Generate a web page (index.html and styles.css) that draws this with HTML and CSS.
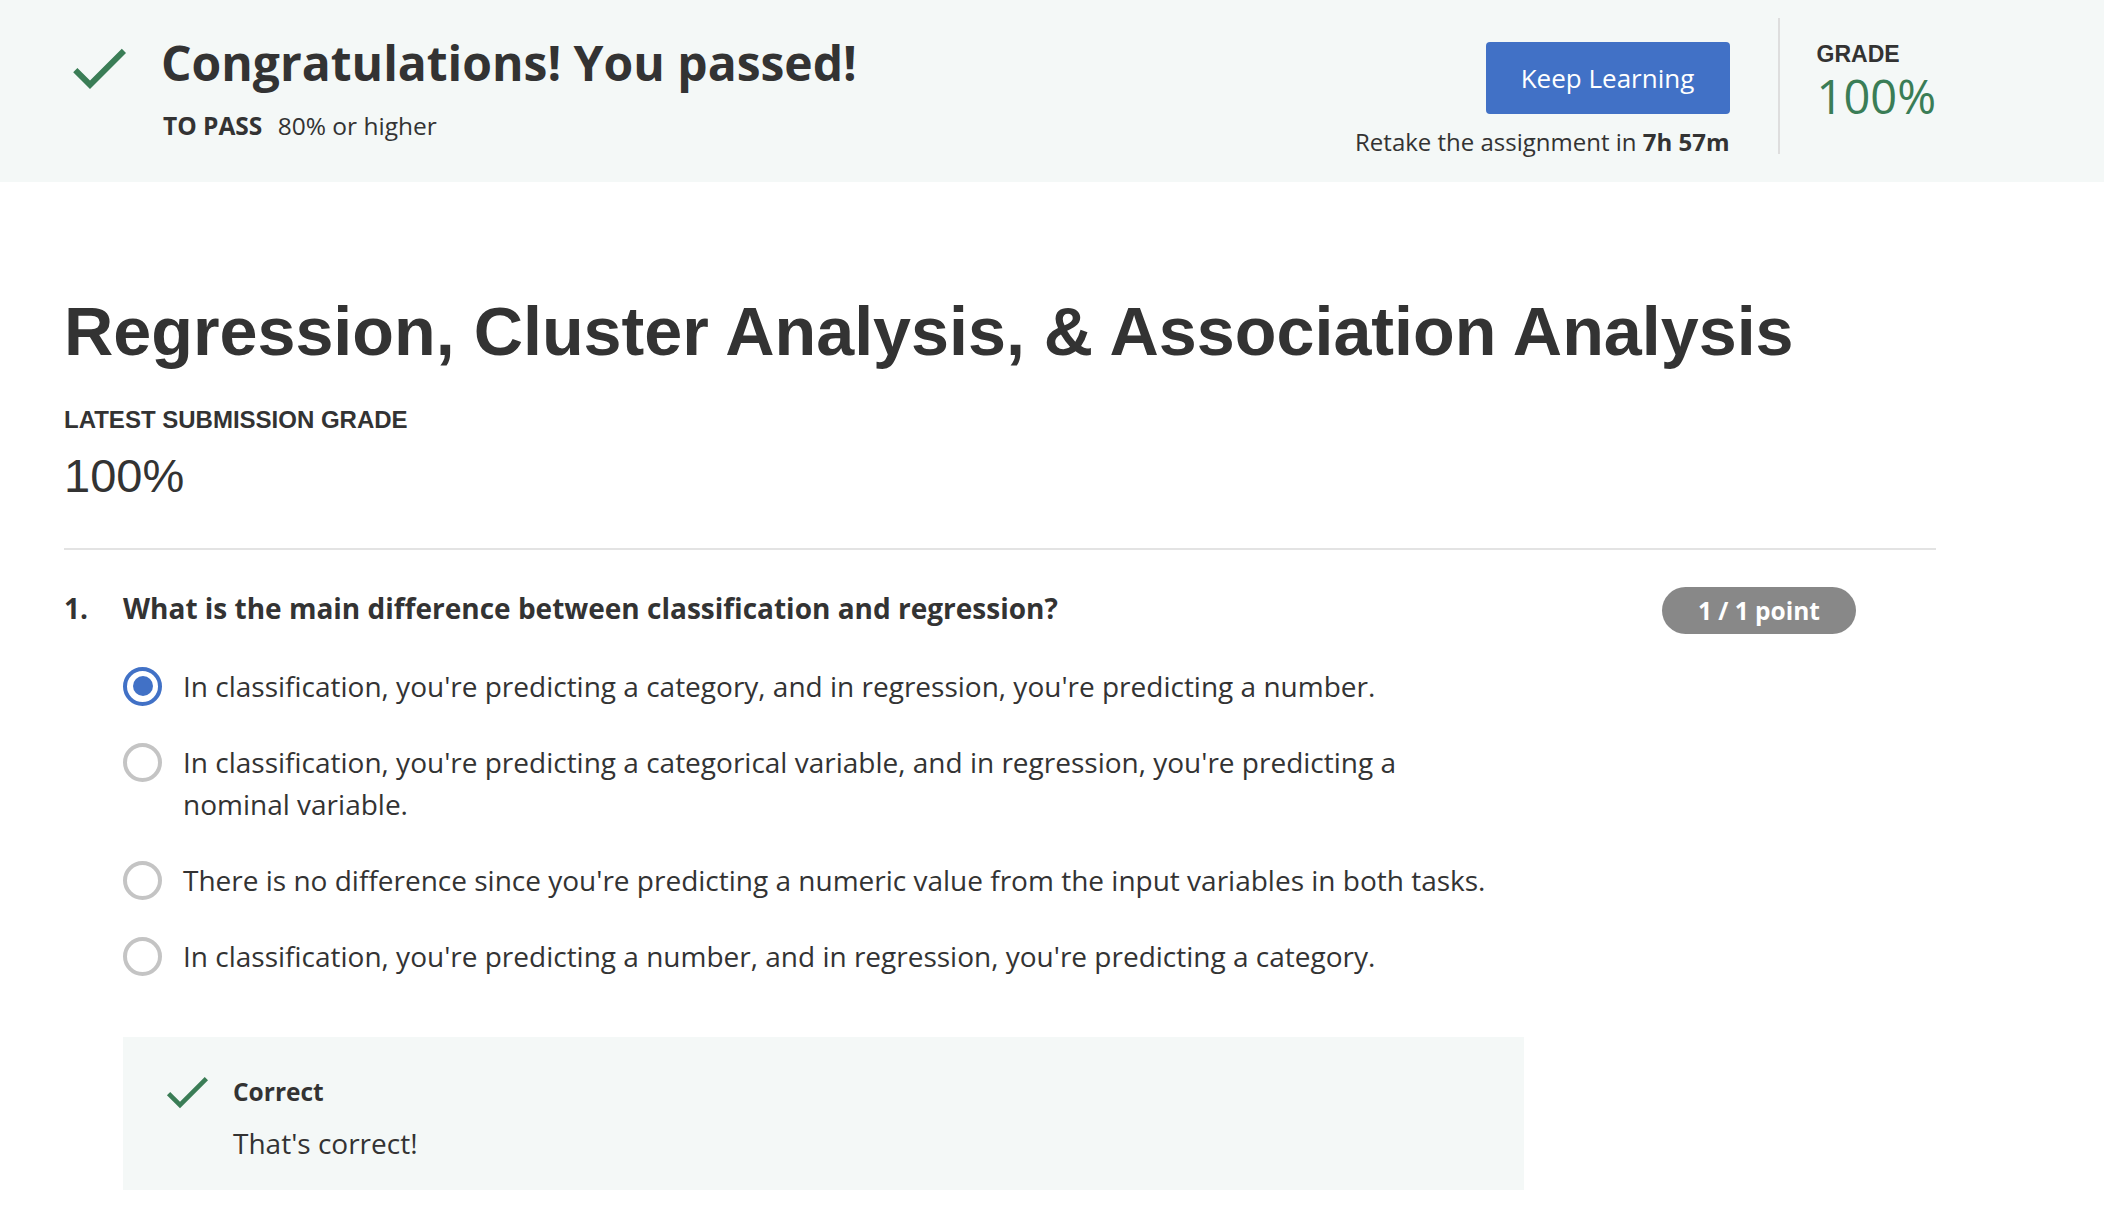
FILE: index.html
```html
<!DOCTYPE html>
<html lang="en">
<head>
<meta charset="utf-8">
<title>Regression, Cluster Analysis, &amp; Association Analysis</title>
<link rel="stylesheet" href="styles.css">
</head>
<body>
<header class="banner">
  <div class="banner-inner">
    <div class="pass">
      <svg class="pass-check" viewBox="0 0 24 24" aria-hidden="true"><path d="M9 16.2L4.8 12l-1.4 1.4L9 19 21 7l-1.4-1.4L9 16.2z"/></svg>
      <div class="pass-text">
        <h1 class="pass-title">Congratulations! You passed!</h1>
        <p class="to-pass"><strong>TO PASS</strong> 80% or higher</p>
      </div>
    </div>
    <div class="banner-right">
      <div class="actions">
        <button class="btn" type="button">Keep Learning</button>
        <p class="retake">Retake the assignment in <strong>7h 57m</strong></p>
      </div>
      <div class="grade">
        <div class="grade-label">GRADE</div>
        <div class="grade-value">100%</div>
      </div>
    </div>
  </div>
</header>

<main class="content">
  <h2 class="title">Regression, Cluster Analysis, &amp; Association Analysis</h2>
  <div class="latest-label">LATEST SUBMISSION GRADE</div>
  <div class="latest-value">100%</div>
  <hr class="divider">

  <section class="question">
    <div class="q-head">
      <span class="q-num">1.</span>
      <span class="q-text">What is the main difference between classification and regression?</span>
      <span class="badge">1 / 1 point</span>
    </div>
    <ul class="options">
      <li class="option"><span class="radio checked"></span><span class="opt-text">In classification, you're predicting a category, and in regression, you're predicting a number.</span></li>
      <li class="option"><span class="radio"></span><span class="opt-text">In classification, you're predicting a categorical variable, and in regression, you're predicting a nominal variable.</span></li>
      <li class="option"><span class="radio"></span><span class="opt-text">There is no difference since you're predicting a numeric value from the input variables in both tasks.</span></li>
      <li class="option"><span class="radio"></span><span class="opt-text">In classification, you're predicting a number, and in regression, you're predicting a category.</span></li>
    </ul>
    <div class="feedback">
      <svg class="fb-check" viewBox="0 0 24 24" aria-hidden="true"><path d="M9 16.2L4.8 12l-1.4 1.4L9 19 21 7l-1.4-1.4L9 16.2z"/></svg>
      <div class="fb-text">
        <div class="fb-title">Correct</div>
        <div class="fb-body">That's correct!</div>
      </div>
    </div>
  </section>
</main>
</body>
</html>
```

FILE: styles.css
```css
* { box-sizing: border-box; }

body {
  margin: 0;
  background: #ffffff;
  color: #333333;
  font-family: "Open Sans", "Noto Sans", sans-serif;
}

/* ---------- banner ---------- */
.banner {
  background: #f4f8f7;
  height: 182px;
}

.banner-inner {
  display: flex;
  justify-content: space-between;
  padding: 0 168px 0 63px;
  height: 100%;
}

.pass {
  display: flex;
  gap: 26px;
  padding-top: 32px;
}

.pass-check {
  width: 72px;
  height: 72px;
  flex: none;
  fill: #3a7d56;
}

.pass-text {
  padding-top: 2px;
}

.pass-title {
  margin: 0;
  font-size: 48px;
  line-height: 58px;
  font-weight: 700;
  color: #333333;
}

.to-pass {
  margin: 16px 0 0 2px;
  font-size: 24.5px;
  line-height: 36px;
}

.to-pass strong {
  margin-right: 9px;
}

.banner-right {
  display: flex;
}

.actions {
  display: flex;
  flex-direction: column;
  align-items: flex-end;
  padding-top: 42px;
}

.btn {
  width: 244px;
  height: 72px;
  border: none;
  border-radius: 4px;
  background: #4171c6;
  color: #ffffff;
  font-family: "Open Sans", sans-serif;
  font-size: 26px;
  font-weight: 400;
  padding: 0;
}

.retake {
  margin: 10px 0 0;
  font-size: 24px;
  line-height: 36px;
}

.grade {
  margin: 18px 0 0 48px;
  height: 136px;
  border-left: 2px solid #dedede;
  padding: 22px 0 0 37px;
}

.grade-label {
  font-family: "Liberation Sans", Arial, sans-serif;
  font-weight: 700;
  font-size: 23px;
  line-height: 28px;
  color: #333333;
}

.grade-value {
  font-size: 47px;
  line-height: 56px;
  font-weight: 400;
  color: #3a7d56;
  margin-top: 0;
}

/* ---------- content ---------- */
.content {
  padding: 0 168px 0 64px;
}

.title {
  margin: 109px 0 0;
  font-family: "Liberation Sans", Arial, sans-serif;
  font-weight: 700;
  font-size: 68.25px;
  line-height: 80px;
  color: #333333;
}

.latest-label {
  margin-top: 35px;
  font-family: "Liberation Sans", Arial, sans-serif;
  font-weight: 700;
  font-size: 24px;
  line-height: 28px;
}

.latest-value {
  margin-top: 14px;
  font-family: "Liberation Sans", Arial, sans-serif;
  font-size: 47px;
  line-height: 56px;
}

.divider {
  margin: 44px 0 0;
  border: none;
  border-top: 2px solid #e3e3e3;
}

.q-head {
  display: flex;
  align-items: flex-start;
  margin-top: 37px;
  font-size: 28px;
  line-height: 42px;
  font-weight: 700;
}

.q-num {
  width: 59px;
  flex: none;
}

.badge {
  margin-left: auto;
  margin-right: 80px;
  height: 47px;
  padding: 0 36px;
  border-radius: 24px;
  background: #888888;
  color: #ffffff;
  font-size: 24.5px;
  line-height: 47px;
  font-weight: 700;
}

.options {
  list-style: none;
  margin: 31px 0 0 59px;
  padding: 0;
  width: 1401px;
  display: flex;
  flex-direction: column;
  gap: 34px;
}

.option {
  display: flex;
  gap: 21px;
}

.radio {
  flex: none;
  width: 39px;
  height: 39px;
  margin-top: 1.5px;
  border: 4px solid #c4c4c4;
  border-radius: 50%;
  display: flex;
  align-items: center;
  justify-content: center;
}

.radio.checked {
  border-color: #4171c6;
}

.radio.checked::after {
  content: "";
  width: 20px;
  height: 20px;
  border-radius: 50%;
  background: #4171c6;
}

.opt-text {
  font-size: 28px;
  line-height: 42px;
  padding-right: 28px;
}

.feedback {
  margin: 60px 0 0 59px;
  width: 1401px;
  background: #f4f8f7;
  display: flex;
  gap: 18px;
  padding: 27px 0 26px 36px;
}

.fb-check {
  width: 56px;
  height: 56px;
  flex: none;
  fill: #3a7d56;
}

.fb-text {
  padding-top: 9.5px;
}

.fb-title {
  font-size: 24.5px;
  line-height: 36px;
  font-weight: 700;
}

.fb-body {
  margin-top: 12px;
  font-size: 28px;
  line-height: 42px;
}
```
